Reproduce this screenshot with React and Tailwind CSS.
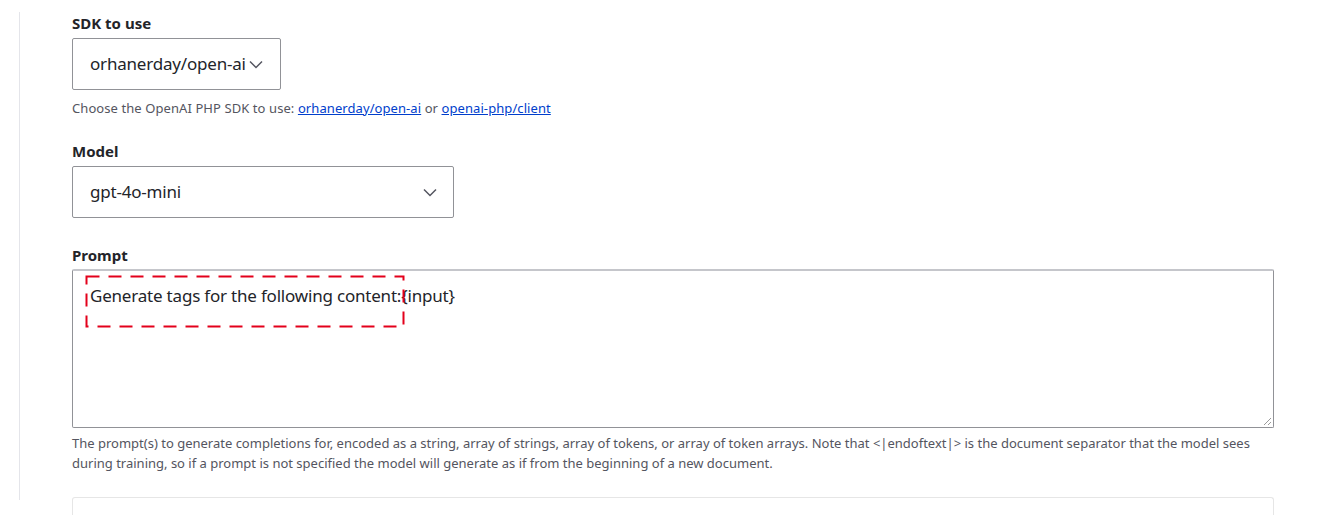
import React from 'react';

const Chevron = () => (
  <svg width="14" height="9" viewBox="0 0 14 9" fill="none">
    <path d="M1 1.5l6 6 6-6" stroke="#545560" strokeWidth="1.5" />
  </svg>
);

const Label = ({ children }) => (
  <div className="text-[15px] font-bold leading-[20px] text-[#232429]">{children}</div>
);

const App = () => {
  return (
    <div className="w-[1344px] h-[515px] bg-white flex font-['Noto_Sans',sans-serif] overflow-hidden">
      <div className="w-[19px] shrink-0" />
      <div className="w-px bg-[#e4e5ea] mt-[12px] h-[488px] shrink-0" />
      <div className="flex-1 pl-[52px] pr-[70px] pt-[13px]">
        <Label>SDK to use</Label>
        <div className="mt-[5px] w-[209px] h-[52px] border border-[#919297] rounded-[2px] flex items-center pl-[17px] pr-[17px] justify-between text-[17px] tracking-[-0.2px] text-[#232429]">
          <span>orhanerday/open-ai</span>
          <Chevron />
        </div>
        <div className="mt-[8px] text-[13px] leading-[20px] tracking-[0.08px] text-[#545560]">
          Choose the OpenAI PHP SDK to use:{' '}
          <a className="text-[#003ecc] underline">orhanerday/open-ai</a> or{' '}
          <a className="text-[#003ecc] underline">openai-php/client</a>
        </div>

        <div className="mt-[23px]">
          <Label>Model</Label>
        </div>
        <div className="mt-[5px] w-[382px] h-[52px] border border-[#919297] rounded-[2px] flex items-center pl-[17px] pr-[16px] justify-between text-[17px] tracking-[-0.2px] text-[#232429]">
          <span>gpt-4o-mini</span>
          <Chevron />
        </div>

        <div className="mt-[27px]">
          <Label>Prompt</Label>
        </div>
        <div className="relative mt-[4px] h-[159px] border border-[#919297] border-t-[#c5c6cb] border-t-2 rounded-[2px] pl-[17px] pt-[13px] text-[17px] leading-[24px] tracking-[-0.2px] text-[#232429]">
          <span>Generate tags for the following content:{'{input}'}</span>
          <svg className="absolute left-[12px] top-[4px]" width="321" height="53" viewBox="0 0 321 53" fill="none">
            <rect x="1.5" y="1.5" width="317" height="50" stroke="#e3001b" strokeWidth="2" strokeDasharray="13 9" />
          </svg>
          <svg className="absolute right-[1px] bottom-[1px]" width="9" height="9" viewBox="0 0 9 9">
            <path d="M8 1L1 8M8 5L5 8" stroke="#9a9a9a" strokeWidth="1" />
          </svg>
        </div>
        <div className="mt-[5px] text-[13px] leading-[20px] text-[#545560]">
          The prompt(s) to generate completions for, encoded as a string, array of strings, array of tokens, or array of token arrays. Note that &lt;|endoftext|&gt; is the document separator that the model sees during training, so if a prompt is not specified the model will generate as if from the beginning of a new document.
        </div>
        <div className="mt-[24px] h-[20px] border border-b-0 border-[#e6e6e6] rounded-t-[3px]" />
      </div>
    </div>
  );
};

export default App;
